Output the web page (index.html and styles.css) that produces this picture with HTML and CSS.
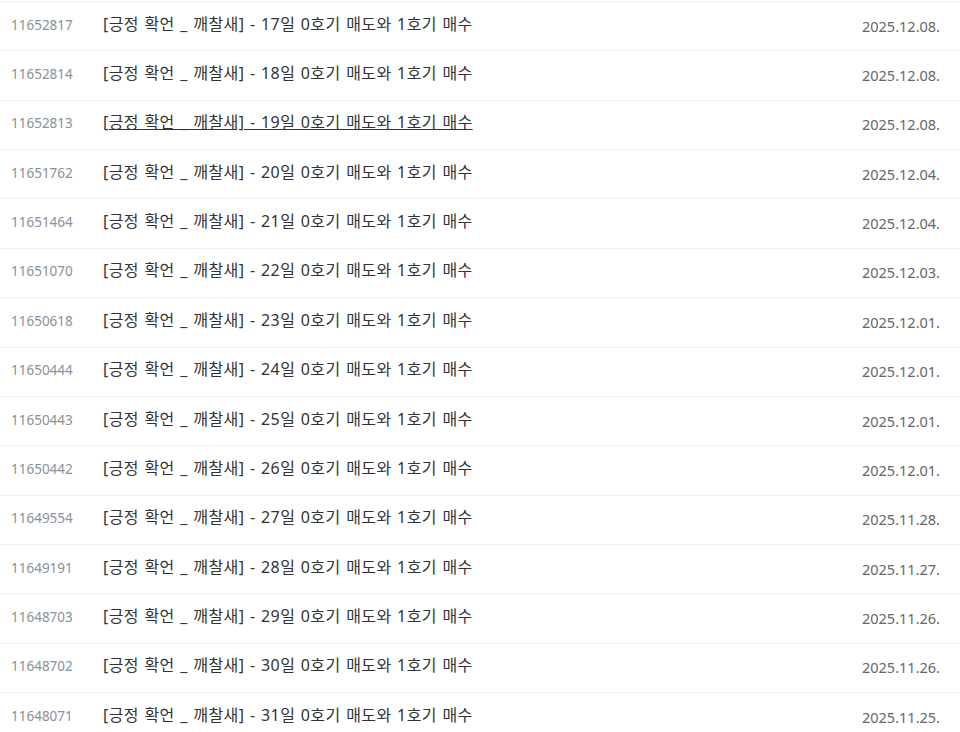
FILE: index.html
```html
<!DOCTYPE html>
<html lang="ko">
<head>
  <meta charset="UTF-8" />
  <meta name="viewport" content="width=device-width, initial-scale=1.0"/>
  <title>게시글 목록</title>
  <link rel="stylesheet" href="styles.css">
</head>
<body>
  <ul class="post-list">
    <li class="post"><span class="post-no">11652817</span><a class="post-title" href="#">[긍정 확언 _ 깨찰새] - 17일 0호기 매도와 1호기 매수</a><span class="post-date">2025.12.08.</span></li>
    <li class="post"><span class="post-no">11652814</span><a class="post-title" href="#">[긍정 확언 _ 깨찰새] - 18일 0호기 매도와 1호기 매수</a><span class="post-date">2025.12.08.</span></li>
    <li class="post"><span class="post-no">11652813</span><a class="post-title hover" href="#">[긍정 확언 _ 깨찰새] - 19일 0호기 매도와 1호기 매수</a><span class="post-date">2025.12.08.</span></li>
    <li class="post"><span class="post-no">11651762</span><a class="post-title" href="#">[긍정 확언 _ 깨찰새] - 20일 0호기 매도와 1호기 매수</a><span class="post-date">2025.12.04.</span></li>
    <li class="post"><span class="post-no">11651464</span><a class="post-title" href="#">[긍정 확언 _ 깨찰새] - 21일 0호기 매도와 1호기 매수</a><span class="post-date">2025.12.04.</span></li>
    <li class="post"><span class="post-no">11651070</span><a class="post-title" href="#">[긍정 확언 _ 깨찰새] - 22일 0호기 매도와 1호기 매수</a><span class="post-date">2025.12.03.</span></li>
    <li class="post"><span class="post-no">11650618</span><a class="post-title" href="#">[긍정 확언 _ 깨찰새] - 23일 0호기 매도와 1호기 매수</a><span class="post-date">2025.12.01.</span></li>
    <li class="post"><span class="post-no">11650444</span><a class="post-title" href="#">[긍정 확언 _ 깨찰새] - 24일 0호기 매도와 1호기 매수</a><span class="post-date">2025.12.01.</span></li>
    <li class="post"><span class="post-no">11650443</span><a class="post-title" href="#">[긍정 확언 _ 깨찰새] - 25일 0호기 매도와 1호기 매수</a><span class="post-date">2025.12.01.</span></li>
    <li class="post"><span class="post-no">11650442</span><a class="post-title" href="#">[긍정 확언 _ 깨찰새] - 26일 0호기 매도와 1호기 매수</a><span class="post-date">2025.12.01.</span></li>
    <li class="post"><span class="post-no">11649554</span><a class="post-title" href="#">[긍정 확언 _ 깨찰새] - 27일 0호기 매도와 1호기 매수</a><span class="post-date">2025.11.28.</span></li>
    <li class="post"><span class="post-no">11649191</span><a class="post-title" href="#">[긍정 확언 _ 깨찰새] - 28일 0호기 매도와 1호기 매수</a><span class="post-date">2025.11.27.</span></li>
    <li class="post"><span class="post-no">11648703</span><a class="post-title" href="#">[긍정 확언 _ 깨찰새] - 29일 0호기 매도와 1호기 매수</a><span class="post-date">2025.11.26.</span></li>
    <li class="post"><span class="post-no">11648702</span><a class="post-title" href="#">[긍정 확언 _ 깨찰새] - 30일 0호기 매도와 1호기 매수</a><span class="post-date">2025.11.26.</span></li>
    <li class="post"><span class="post-no">11648071</span><a class="post-title" href="#">[긍정 확언 _ 깨찰새] - 31일 0호기 매도와 1호기 매수</a><span class="post-date">2025.11.25.</span></li>
  </ul>
</body>
</html>
```
FILE: styles.css
```css
body {
  margin: 0;
  background: #fff;
  font-family: "Noto Sans", "Noto Sans CJK KR", sans-serif;
}

.post-list {
  list-style: none;
  margin: 0;
  padding: 1px 0 0;
}

.post {
  display: flex;
  align-items: center;
  height: 49.36px;
  box-sizing: border-box;
  border-top: 1px solid #f0f0f0;
  padding: 0 20px 0 11px;
}

.post-no {
  width: 92px;
  flex-shrink: 0;
  font-size: 13.5px;
  color: #8a909b;
  padding-bottom: 3px;
}

.post-title {
  flex: 1;
  font-size: 16px;
  letter-spacing: 0.4px;
  word-spacing: 1px;
  color: #333;
  text-decoration: none;
  padding-bottom: 7px;
}

.post-title.hover {
  text-decoration: underline;
}

.post-date {
  font-size: 14.5px;
  color: #666;
  padding-bottom: 1px;
}
```
